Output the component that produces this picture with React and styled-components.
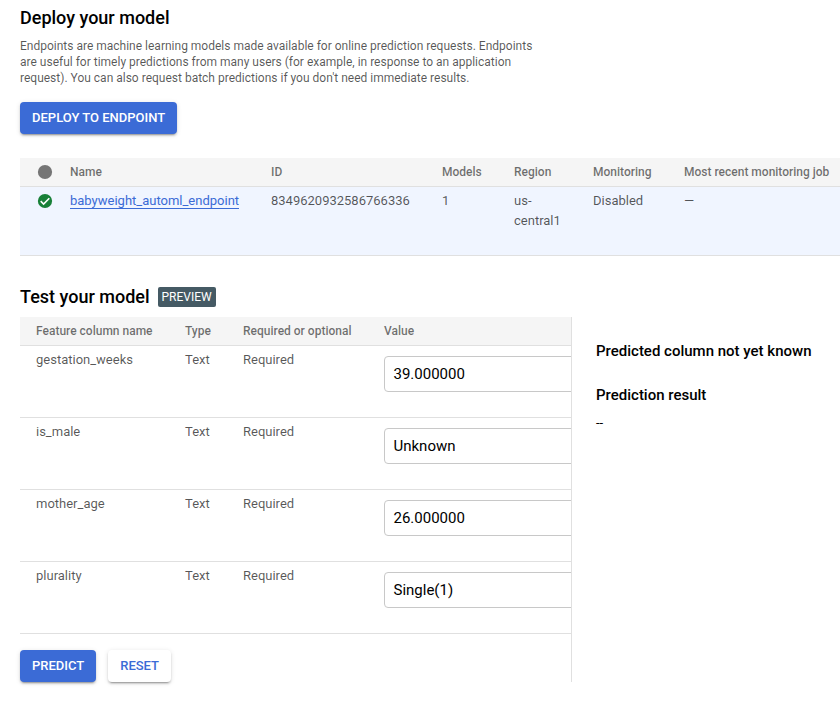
import React from "react";
import styled, { createGlobalStyle } from "styled-components";

const Global = createGlobalStyle`
  * { box-sizing: border-box; }
  html, body { margin: 0; background: #fff; overflow: hidden; }
  body { font-family: Roboto, sans-serif; font-size: 13px; line-height: 20px; color: rgba(0,0,0,.66); }
`;
const Page = styled.main`
  width: 840px; height: 701px; padding: 6px 0 0 20px; overflow: hidden;
`;
const Heading = styled.h2`
  margin: 0; font-size: 18px; line-height: 24px; font-weight: 500; color: #000;
`;
const Intro = styled.p`
  margin: 8px 0 16px; width: 520px; font-size: 12px; line-height: 16px;
`;
const Button = styled.button`
  height: 32px; padding: 0 12px; border: 0; border-radius: 4px;
  font: 500 13px/32px Roboto, sans-serif; white-space: nowrap;
  color: ${(p) => (p.$primary ? "#fff" : "#3b6bd6")};
  background: ${(p) => (p.$primary ? "#3b6bd6" : "#fff")};
  box-shadow: 0 3px 1px -2px rgba(0,0,0,.2), 0 2px 2px rgba(0,0,0,.14), 0 1px 5px rgba(0,0,0,.12);
`;
const EndpointTable = styled.section`
  margin-top: 24px; width: 820px;
`;
const EndpointRow = styled.div`
  display: grid; grid-template-columns: 50px 201px 171px 72px 79px 91px 1fr;
  height: ${(p) => (p.$head ? 29 : 69)}px; padding-top: 4px;
  background: ${(p) => (p.$head ? "#f5f5f5" : "#f0f5ff")};
  color: ${(p) => (p.$head ? "rgba(0,0,0,.56)" : "rgba(0,0,0,.66)")};
  border-bottom: 1px solid #e0e0e0; white-space: nowrap;
  font-size: ${(p) => (p.$head ? 12 : 13)}px; font-weight: ${(p) => (p.$head ? 500 : 400)};
`;
const Status = styled.span`
  padding: 2px 0 0 17px; svg { display: block; }
`;
const Link = styled.a`
  color: #3b6bd6; border-bottom: 1px solid #3b6bd6;
`;
const TitleRow = styled.div`
  display: flex; gap: 8px; align-items: center; margin-top: 29px; height: 24px;
`;
const Badge = styled.span`
  height: 20px; padding: 0 4px; border-radius: 2px; background: #455a64; color: #fff; font-size: 12px;
`;
const Workspace = styled.div`
  display: flex; margin-top: 8px; height: 365px;
`;
const FormPane = styled.section`
  width: 552px; border-right: 1px solid #e0e0e0;
`;
const FeatureTable = styled.div`
  overflow: hidden;
`;
const FeatureRow = styled.div`
  display: grid; grid-template-columns: 149px 58px 141px 1fr;
  height: ${(p) => (p.$head ? 29 : 72)}px; padding: 4px 0 0 16px;
  background: ${(p) => (p.$head ? "#f5f5f5" : "#fff")};
  color: ${(p) => (p.$head ? "rgba(0,0,0,.56)" : "rgba(0,0,0,.66)")};
  border-bottom: 1px solid #e0e0e0;
  font-size: ${(p) => (p.$head ? 12 : 13)}px; font-weight: ${(p) => (p.$head ? 500 : 400)};
`;
const Field = styled.div`
  width: 240px; height: 36px; margin-top: 6px; padding: 0 8.5px;
  border: 1px solid #c8c8c8; border-radius: 4px; color: #000; font-size: 15px; line-height: 34px;
`;
const Actions = styled.div`
  display: flex; gap: 12px; margin-top: 16px;
`;
const Results = styled.aside`
  padding: 24px 0 0 24px; color: #000;
`;
const ResultTitle = styled.h3`
  margin: 0 0 24px; font-size: 15px; line-height: 20px; font-weight: 500;
`;
const ResultValue = styled.div`
  margin-top: -16px; font-size: 13px;
`;

const features = [
  ["gestation_weeks", "39.000000"],
  ["is_male", "Unknown"],
  ["mother_age", "26.000000"],
  ["plurality", "Single(1)"],
];

export default function App() {
  return (
    <Page>
      <Global />
      <Heading>Deploy your model</Heading>
      <Intro>
        Endpoints are machine learning models made available for online prediction requests. Endpoints<br />
        are useful for timely predictions from many users (for example, in response to an application<br />
        request). You can also request batch predictions if you don't need immediate results.
      </Intro>
      <Button $primary>DEPLOY TO ENDPOINT</Button>
      <EndpointTable>
        <EndpointRow $head>
          <Status><svg width="16" height="16"><circle cx="8" cy="8" r="7.1" fill="#757575" /></svg></Status>
          <span>Name</span><span>ID</span><span>Models</span><span>Region</span><span>Monitoring</span><span>Most recent monitoring job</span>
        </EndpointRow>
        <EndpointRow>
          <Status>
            <svg width="16" height="16"><circle cx="8" cy="8" r="7.1" fill="#188038" /><path d="M3.7 8.2 6.6 11l5.7-5.8" fill="none" stroke="#fff" strokeWidth="1.6" /></svg>
          </Status>
          <span><Link>babyweight_automl_endpoint</Link></span>
          <span>8349620932586766336</span><span>1</span><span>us-<br />central1</span><span>Disabled</span><span>—</span>
        </EndpointRow>
      </EndpointTable>
      <TitleRow><Heading>Test your model</Heading><Badge>PREVIEW</Badge></TitleRow>
      <Workspace>
        <FormPane>
          <FeatureTable>
            <FeatureRow $head><span>Feature column name</span><span>Type</span><span>Required or optional</span><span>Value</span></FeatureRow>
            {features.map(([name, value]) => (
              <FeatureRow key={name}><span>{name}</span><span>Text</span><span>Required</span><Field>{value}</Field></FeatureRow>
            ))}
          </FeatureTable>
          <Actions><Button $primary>PREDICT</Button><Button>RESET</Button></Actions>
        </FormPane>
        <Results>
          <ResultTitle>Predicted column not yet known</ResultTitle>
          <ResultTitle>Prediction result</ResultTitle>
          <ResultValue>--</ResultValue>
        </Results>
      </Workspace>
    </Page>
  );
}
